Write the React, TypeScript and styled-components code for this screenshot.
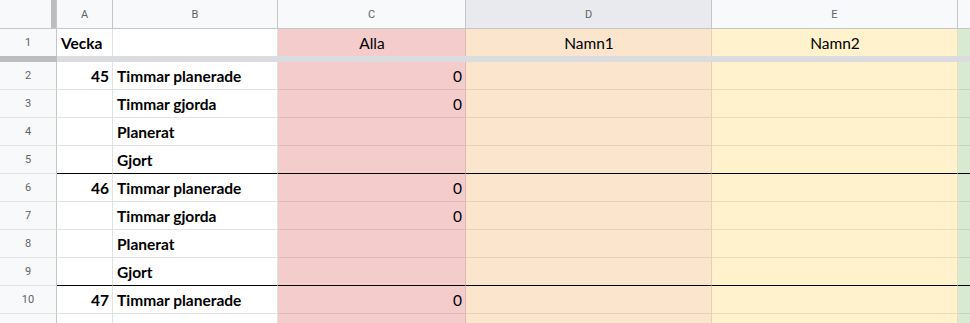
import React from 'react'
import styled, { createGlobalStyle } from 'styled-components'

const GlobalStyle = createGlobalStyle`
    html, body {
        margin:0;
        padding:0;
        background:#ffffff;
        overflow:hidden;
    }
`

type Tone = 'white' | 'red' | 'orange' | 'yellow' | 'green'

const toneBg: Record<Tone, string> = {
    white: '#ffffff',
    red: '#f4cccc',
    orange: '#fce5cd',
    yellow: '#fff2cc',
    green: '#d9ead3',
}

const Viewport = styled.div`
    width:970px;
    height:323px;
    overflow:hidden;
`

const Grid = styled.div`
    display:grid;
    grid-template-columns: 57px 56px 165px 188px 246px 246px 246px;
    grid-template-rows: 29px 27px 6px;
    grid-auto-rows: 28px;
    width:max-content;
`

const Corner = styled.div`
    display:flex;
    justify-content:flex-end;
    background:#f8f9fa;
    border-right:1px solid #c4c7c5;
    border-bottom:1px solid #c4c7c5;
`

const CornerHandle = styled.div`
    width:5px;
    background:#bdbdbd;
`

const ColHeader = styled.div<{ $active?: boolean }>`
    display:flex;
    align-items:center;
    justify-content:center;
    background:${p => p.$active ? '#e8eaed' : '#f8f9fa'};
    border-right:1px solid #c4c7c5;
    border-bottom:1px solid #c4c7c5;
    font-family:Roboto, "Liberation Sans", sans-serif;
    font-size:11px;
    color:#5f6368;
    padding-top:1px;
`

const RowHeader = styled.div<{ $last?: boolean }>`
    display:flex;
    align-items:center;
    justify-content:center;
    background:#f8f9fa;
    border-right:1px solid #c4c7c5;
    border-bottom:${p => p.$last ? 'none' : '1px solid #e1e3e1'};
    font-family:Roboto, "Liberation Sans", sans-serif;
    font-size:11px;
    color:#5f6368;
`

const FreezeHandle = styled.div`
    background:#bdbdbd;
`

const FreezeLine = styled.div`
    grid-column: 2 / -1;
    background:#dadce0;
`

const Cell = styled.div<{ $tone: Tone; $align?: 'left' | 'right' | 'center'; $bold?: boolean; $thick?: boolean; $last?: boolean }>`
    display:flex;
    align-items:flex-end;
    justify-content:${p => p.$align === 'right' ? 'flex-end' : p.$align === 'center' ? 'center' : 'flex-start'};
    padding:0 3px 3px 4px;
    background:${p => toneBg[p.$tone]};
    border-right:1px solid ${p => p.$tone === 'white' ? '#e1e3e1' : 'rgba(0,0,0,0.09)'};
    border-bottom:${p => p.$last ? 'none' : p.$thick ? '1px solid #000000' : `1px solid ${p.$tone === 'white' ? '#e1e3e1' : 'rgba(0,0,0,0.09)'}`};
    font-family:Lato, "Liberation Sans", sans-serif;
    font-size:15.5px;
    line-height:19px;
    font-weight:${p => p.$bold ? 700 : 400};
    color:#000000;
    white-space:nowrap;
    overflow:hidden;
`

interface IRow {
    week?: number
    label: string
    total?: string
}

const labels = ['Timmar planerade', 'Timmar gjorda', 'Planerat', 'Gjort']
const weeks = [45, 46, 47]

const rows: IRow[] = []
weeks.forEach(w => {
    labels.forEach((label, i) => {
        rows.push({
            week: i === 0 ? w : undefined,
            label,
            total: i < 2 ? '0' : undefined,
        })
    })
})

const columns = ['A', 'B', 'C', 'D', 'E', 'F']

class App extends React.Component {
    render() {
        return (
            <React.Fragment>
                <GlobalStyle />
                <Viewport>
                    <Grid>
                        <Corner><CornerHandle /></Corner>
                        {columns.map(c => <ColHeader key={c} $active={c === 'D'}>{c}</ColHeader>)}

                        <RowHeader $last>1</RowHeader>
                        <Cell $tone="white" $bold $last>Vecka</Cell>
                        <Cell $tone="white" $last></Cell>
                        <Cell $tone="red" $align="center" $last>Alla</Cell>
                        <Cell $tone="orange" $align="center" $last>Namn1</Cell>
                        <Cell $tone="yellow" $align="center" $last>Namn2</Cell>
                        <Cell $tone="green" $align="center" $last></Cell>

                        <FreezeHandle />
                        <FreezeLine />

                        {rows.map((r, i) => {
                            const thick = i % 4 === 3
                            return (
                                <React.Fragment key={i}>
                                    <RowHeader>{i + 2}</RowHeader>
                                    <Cell $tone="white" $align="right" $bold $thick={thick}>{r.week}</Cell>
                                    <Cell $tone="white" $bold $thick={thick}>{r.label}</Cell>
                                    <Cell $tone="red" $align="right" $thick={thick}>{r.total}</Cell>
                                    <Cell $tone="orange" $thick={thick}></Cell>
                                    <Cell $tone="yellow" $thick={thick}></Cell>
                                    <Cell $tone="green" $thick={thick}></Cell>
                                </React.Fragment>
                            )
                        })}
                    </Grid>
                </Viewport>
            </React.Fragment>
        )
    }
}

export default App
